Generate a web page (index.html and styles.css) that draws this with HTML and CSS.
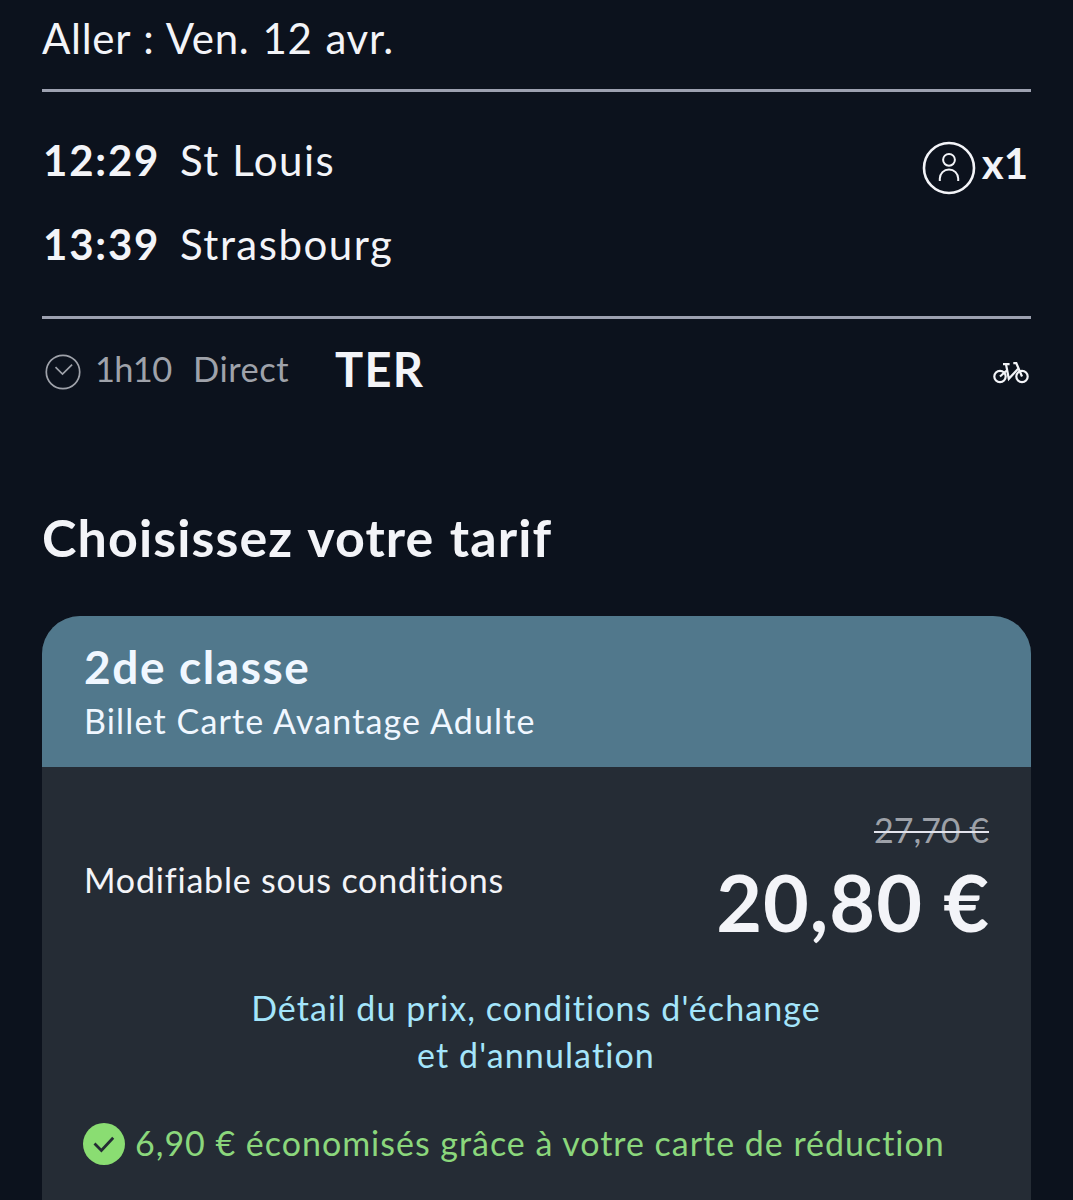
FILE: index.html
```html
<!DOCTYPE html>
<html lang="fr">
<head>
    <meta charset="UTF-8">
    <meta name="viewport" content="width=device-width, initial-scale=1.0">
    <title>Choisissez votre tarif</title>
    <link rel="stylesheet" href="styles.css">
</head>
<body>
    <main class="container">
        <h2 class="date">Aller : Ven. 12 avr.</h2>

        <!-- Journey -->
        <section class="journey">
            <div class="stops">
                <div class="stop"><span class="time">12:29</span><span class="city">St Louis</span></div>
                <div class="stop"><span class="time">13:39</span><span class="city">Strasbourg</span></div>
            </div>
            <div class="passengers">
                <svg class="icon-person" viewBox="0 0 54 54" fill="none" stroke="currentColor">
                    <circle cx="27" cy="27" r="25" stroke-width="2.6"/>
                    <circle cx="27" cy="18.8" r="5.9" stroke-width="2"/>
                    <path d="M17.8 40v-2.4a9.2 9.2 0 0 1 18.4 0v2.4" stroke-width="2"/>
                </svg>
                <span class="count">x1</span>
            </div>
        </section>

        <section class="details">
            <svg class="icon-clock" viewBox="0 0 36 36" fill="none" stroke="currentColor">
                <circle cx="18" cy="18" r="16.7" stroke-width="1.7"/>
                <path d="M10.5 13.2l7 6.8 9.6-9.4" stroke-width="1.7"/>
            </svg>
            <span class="duration">1h10</span>
            <span class="direct">Direct</span>
            <strong class="train">TER</strong>
            <svg class="icon-bike" viewBox="0 0 36 24" fill="none" stroke="currentColor" stroke-width="2.2">
                <circle cx="7" cy="15.5" r="5.7"/>
                <circle cx="29" cy="15.5" r="5.7"/>
                <path d="M7 15.5l6.4-5.7M10 3.2h6.6M13 3.2l2.8 14.6L25.4 7.4M20.3 2.2h3l5.7 13.3"/>
            </svg>
        </section>

        <h1 class="title">Choisissez votre tarif</h1>

        <!-- Fare card -->
        <section class="card">
            <header class="card-header">
                <h3>2de classe</h3>
                <p>Billet Carte Avantage Adulte</p>
            </header>
            <div class="card-body">
                <div class="offer">
                    <p class="condition">Modifiable sous conditions</p>
                    <div class="prices">
                        <span class="old-price">27,70 €</span>
                        <span class="price">20,80 €</span>
                    </div>
                </div>
                <a class="price-link">Détail du prix, conditions d'échange<br>et d'annulation</a>
                <div class="saving">
                    <svg class="icon-check" viewBox="0 0 42 42">
                        <circle cx="21" cy="21" r="21" fill="#8add72"/>
                        <path d="M11.5 20.5l6.9 6.9 11.8-12.7" fill="none" stroke="#252c34" stroke-width="2.8"/>
                    </svg>
                    <span>6,90 € économisés grâce à votre carte de réduction</span>
                </div>
            </div>
        </section>
    </main>
</body>
</html>
```

FILE: styles.css
```css
* {
    box-sizing: border-box;
}

body {
    margin: 0;
    height: 1200px;
    overflow: hidden;
    background: #0c121d;
    color: #f3f4f8;
    font-family: Lato, 'Liberation Sans', sans-serif;
}

h1,
h2,
h3,
p {
    margin: 0;
}

svg {
    display: block;
    flex-shrink: 0;
}

.container {
    padding: 0 42px;
}

.date {
    height: 92px;
    padding-top: 13px;
    border-bottom: 3px solid #9da1b0;
    font-size: 42px;
    font-weight: 400;
    line-height: 50px;
    letter-spacing: 0.7px;
    word-spacing: 1.5px;
    white-space: nowrap;
}

/* Journey */
.journey {
    display: flex;
    justify-content: space-between;
    height: 227px;
    padding: 26px 3px 0 1px;
    border-bottom: 3px solid #9da1b0;
}

.stop {
    display: flex;
    font-size: 42px;
    line-height: 84px;
    white-space: nowrap;
}

.time {
    width: 137px;
    font-weight: 700;
    letter-spacing: 1.8px;
}

.city {
    letter-spacing: 1.5px;
}

.passengers {
    display: flex;
    height: 54px;
    margin-top: 23px;
    gap: 6px;
}

.icon-person {
    width: 54px;
    height: 54px;
}

.count {
    font-size: 42px;
    font-weight: 700;
    line-height: 45px;
}

.details {
    display: flex;
    align-items: center;
    height: 98px;
    padding: 0 2px 0 3px;
    color: #9fa2aa;
    font-size: 34.5px;
    white-space: nowrap;
}

.icon-clock {
    width: 36px;
    height: 36px;
    margin: 8px 14px 0 0;
}

.duration {
    width: 98px;
    letter-spacing: -0.7px;
}

.direct {
    width: 142px;
    letter-spacing: 0.5px;
}

.train {
    margin-top: 2px;
    color: #f3f4f8;
    font-size: 47px;
    letter-spacing: 1.3px;
}

.icon-bike {
    width: 36px;
    height: 24px;
    margin: 9px 0 0 auto;
    color: #f3f4f8;
}

.title {
    padding-top: 90px;
    font-size: 52px;
    font-weight: 700;
    line-height: 60px;
    letter-spacing: 1.1px;
    word-spacing: 1.5px;
    white-space: nowrap;
}

/* Fare card */
.card {
    height: 640px;
    margin-top: 49px;
    border-radius: 38px;
    background: #252c35;
    overflow: hidden;
}

.card-header {
    height: 151px;
    padding: 23px 42px 0;
    background: #51788c;
    color: #f0f7ff;
    white-space: nowrap;
}

.card-header h3 {
    font-size: 46px;
    line-height: 56px;
    letter-spacing: 1.6px;
}

.card-header p {
    font-size: 34px;
    line-height: 52px;
    letter-spacing: 1.15px;
}

.card-body {
    padding: 0 42px 0 41px;
    white-space: nowrap;
}

.offer {
    display: flex;
    justify-content: space-between;
    height: 217px;
}

.condition {
    padding: 93px 0 0 1px;
    font-size: 34px;
    line-height: 40px;
    letter-spacing: 0.8px;
}

.prices {
    display: flex;
    flex-direction: column;
    align-items: flex-end;
    padding-top: 43px;
}

.old-price {
    color: #9da1a8;
    font-size: 34px;
    line-height: 40px;
    text-decoration: line-through #e3e4ed 2px;
}

.price {
    margin-right: -1px;
    font-size: 79px;
    font-weight: 700;
    line-height: 104px;
    letter-spacing: 1px;
}

.price-link {
    display: block;
    color: #a4e5fb;
    font-size: 34px;
    line-height: 47px;
    letter-spacing: 1.1px;
    text-align: center;
}

.saving {
    display: flex;
    align-items: center;
    height: 42px;
    margin-top: 45px;
    gap: 10px;
    color: #8bd77c;
    font-size: 34px;
    line-height: 38px;
    letter-spacing: 0.98px;
}

.saving span {
    margin-top: -2px;
}

.icon-check {
    width: 42px;
    height: 42px;
}
```
